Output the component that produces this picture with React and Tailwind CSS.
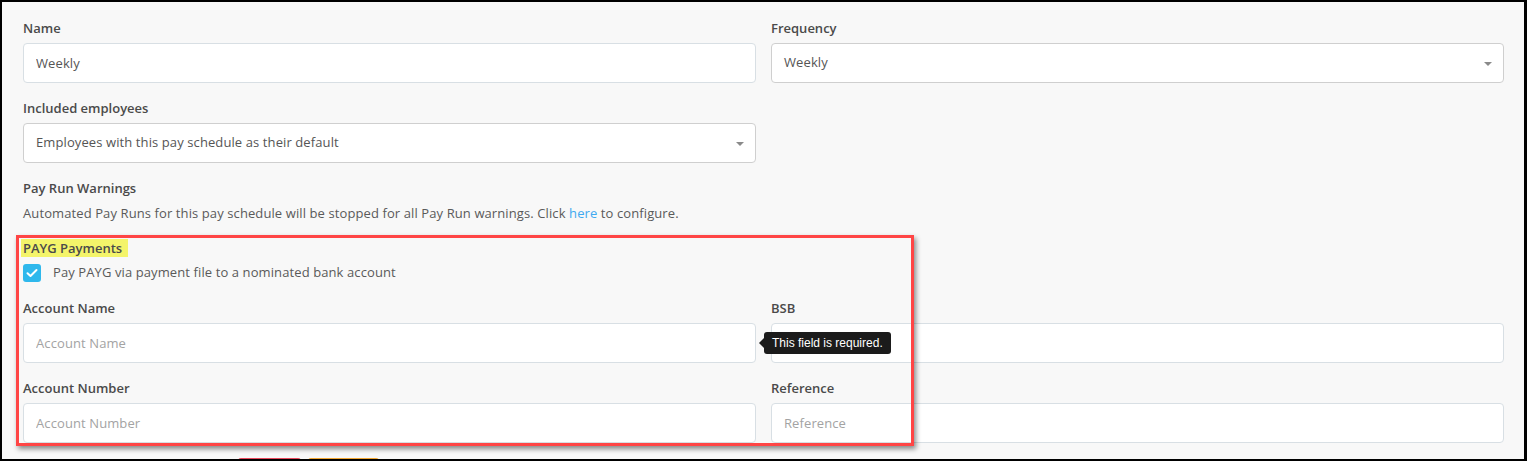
import { useState } from "react";

function Label({ children }) {
    return (
        <div className="h-5 leading-5 mb-[5px] text-[13px] font-semibold text-[#4a4a4a]">
            {children}
        </div>
    );
}

function TextField({ label, value, placeholder, onChange }) {
    return (
        <div>
            <Label>{label}</Label>
            <input
                type="text"
                value={value}
                placeholder={placeholder}
                onChange={onChange}
                className="w-full h-10 px-[12px] bg-white border border-[#d8dfe4] rounded-[4px] text-[13px] tracking-[0.1px] text-[#555] placeholder:text-[#a3a3a3] outline-none"
            />
        </div>
    );
}

function SelectField({ label, value }) {
    return (
        <div>
            <Label>{label}</Label>
            <div className="relative h-10 flex items-center px-[12px] bg-white border border-[#cfcfcf] rounded-[4px] text-[13px] tracking-[0.1px] text-[#555]">
                {value}
                <span className="absolute right-[11px] top-[18px] w-0 h-0 border-l-[4px] border-r-[4px] border-t-[4px] border-l-transparent border-r-transparent border-t-[#8a8a8a]" />
            </div>
        </div>
    );
}

export default function PayScheduleForm() {
    const [name, setName] = useState("Weekly");
    const [payViaFile, setPayViaFile] = useState(true);
    const [bank, setBank] = useState({ accountName: "", bsb: "", accountNumber: "", reference: "" });

    const update = (key) => (e) => setBank({ ...bank, [key]: e.target.value });

    return (
        <div
            className="relative w-full h-[461px] overflow-hidden bg-[#f8f8f8] border-2 border-r-[3px] border-black"
            style={{ fontFamily: "'Open Sans', Lato, sans-serif" }}
        >
            <div className="pl-[21px] pr-[20px] pt-[16px]">
                <div className="grid grid-cols-2 gap-x-[15px] gap-y-[15px]">
                    <TextField label="Name" value={name} onChange={(e) => setName(e.target.value)} />
                    <SelectField label="Frequency" value="Weekly" />
                    <SelectField label="Included employees" value="Employees with this pay schedule as their default" />
                    <div />
                </div>

                <div className="mt-[15px]">
                    <Label>Pay Run Warnings</Label>
                    <p className="h-5 leading-5 text-[13px] tracking-[0.1px] text-[#5a5a5a]">
                        Automated Pay Runs for this pay schedule will be stopped for all Pay Run warnings. Click{" "}
                        <a href="#" className="text-[#3fa9f0]">here</a> to configure.
                    </p>
                </div>

                <div className="mt-[15px]">
                    <div className="h-5 mb-[5px] flex items-center">
                        <span className="h-[18px] leading-[18px] bg-[#f4f46a] pl-[2px] pr-[6px] -ml-[2px] text-[13px] font-semibold text-[#4a4a4a]">
                            PAYG Payments
                        </span>
                    </div>
                    <label className="h-5 flex items-center gap-[12px] text-[13px] tracking-[0.1px] text-[#5a5a5a] cursor-pointer">
                        <span
                            onClick={() => setPayViaFile(!payViaFile)}
                            className={`w-[18px] h-[18px] rounded-[3px] flex items-center justify-center ${payViaFile ? "bg-[#2fb8ec]" : "bg-white border border-[#ccc]"}`}
                        >
                            {payViaFile && (
                                <svg width="12" height="10" viewBox="0 0 12 10" fill="none">
                                    <path d="M1.5 5.2 L4.5 8 L10.5 2" stroke="white" strokeWidth="2" strokeLinecap="round" strokeLinejoin="round" />
                                </svg>
                            )}
                        </span>
                        Pay PAYG via payment file to a nominated bank account
                    </label>
                </div>

                <div className="mt-[15px] grid grid-cols-2 gap-x-[15px] gap-y-[15px]">
                    <TextField label="Account Name" placeholder="Account Name" value={bank.accountName} onChange={update("accountName")} />
                    <TextField label="BSB" value={bank.bsb} onChange={update("bsb")} />
                    <TextField label="Account Number" placeholder="Account Number" value={bank.accountNumber} onChange={update("accountNumber")} />
                    <TextField label="Reference" placeholder="Reference" value={bank.reference} onChange={update("reference")} />
                </div>

                {/* action buttons, mostly below the fold */}
                <div className="mt-[15px] flex gap-[7px] pl-[215px]">
                    <button className="h-9 w-[63px] rounded-[3px] bg-[#e8475a]" />
                    <button className="h-9 w-[71px] rounded-[3px] bg-[#f2a631]" />
                </div>
            </div>

            {/* validation tooltip on the BSB field */}
            <div className="absolute left-[757px] top-[330px] flex items-center">
                <span className="w-0 h-0 border-t-[5px] border-b-[5px] border-r-[5px] border-t-transparent border-b-transparent border-r-[#1b1b1b]" />
                <span className="h-[22px] px-[8px] flex items-center rounded-[3px] bg-[#1b1b1b] text-white text-[12px]" style={{ fontFamily: "'Liberation Sans', Arial, sans-serif" }}>
                    This field is required.
                </span>
            </div>

            {/* highlight frame around the PAYG section */}
            <div className="absolute left-[14px] top-[233px] w-[898px] h-[211px] border-[3px] border-[#ff4545] shadow-[2px_3px_5px_rgba(0,0,0,0.45)] pointer-events-none" />
        </div>
    );
}
